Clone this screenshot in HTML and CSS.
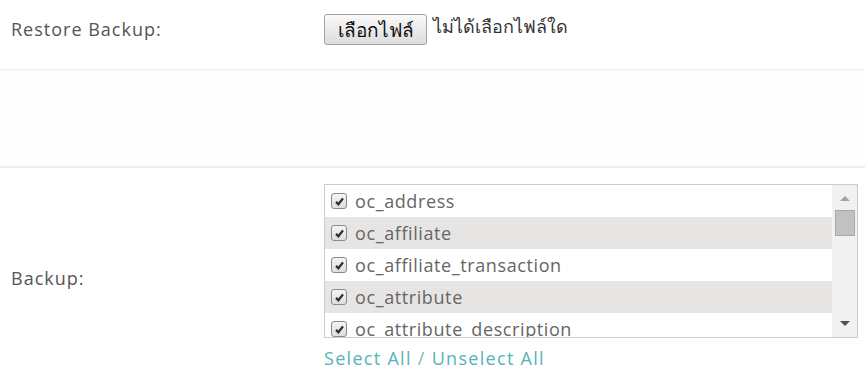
FILE: index.html
```html
<!DOCTYPE html>
<html lang="en">
<head>
  <meta charset="UTF-8">
  <meta name="viewport" content="width=device-width, initial-scale=1.0">
  <title>Backup / Restore</title>
  <link rel="stylesheet" href="styles.css">
</head>
<body>
  <!-- Restore -->
  <div class="form-row restore-row">
    <div class="form-label">Restore Backup:</div>
    <div class="form-control">
      <span class="file-button">เลือกไฟล์</span>
      <span class="file-name">ไม่ได้เลือกไฟล์ใด</span>
    </div>
  </div>

  <div class="form-gap"></div>

  <!-- Backup tables -->
  <div class="form-row backup-row">
    <div class="form-label">Backup:</div>
    <div class="form-control column">
      <div class="table-list">
        <div class="table-items">
          <div class="table-item"><span class="check"><svg viewBox="0 0 12 12"><path d="M2.2 6.4 L4.8 9 L9.8 2.6" /></svg></span>oc_address</div>
          <div class="table-item odd"><span class="check"><svg viewBox="0 0 12 12"><path d="M2.2 6.4 L4.8 9 L9.8 2.6" /></svg></span>oc_affiliate</div>
          <div class="table-item"><span class="check"><svg viewBox="0 0 12 12"><path d="M2.2 6.4 L4.8 9 L9.8 2.6" /></svg></span>oc_affiliate_transaction</div>
          <div class="table-item odd"><span class="check"><svg viewBox="0 0 12 12"><path d="M2.2 6.4 L4.8 9 L9.8 2.6" /></svg></span>oc_attribute</div>
          <div class="table-item last"><span class="check"><svg viewBox="0 0 12 12"><path d="M2.2 6.4 L4.8 9 L9.8 2.6" /></svg></span>oc_attribute_description</div>
        </div>
        <div class="scrollbar">
          <span class="arrow up"></span>
          <span class="thumb"></span>
          <span class="track"></span>
          <span class="arrow down"></span>
        </div>
      </div>
      <div class="select-links">
        <a href="#">Select All</a> / <a href="#">Unselect All</a>
      </div>
    </div>
  </div>
</body>
</html>
```

FILE: styles.css
```css
body {
  margin: 0;
  background-color: #fff;
  font-family: "Open Sans", Arial, sans-serif;
  color: #555;
}
.form-row {
  display: grid;
  grid-template-columns: 313px 1fr;
  align-items: center;
  padding: 0 7px 0 11px;
  border-bottom: 1px solid #ededed;
}
.form-label {
  font-size: 18px;
  letter-spacing: 1px;
  color: #555;
}
.form-control {
  display: flex;
  min-width: 0;
}
.form-control.column {
  flex-direction: column;
}
.restore-row {
  height: 70px;
  box-sizing: border-box;
  align-items: start;
  padding-top: 14px;
}
.restore-row .form-label {
  padding-top: 3px;
}
.file-button {
  width: 103px;
  height: 31px;
  box-sizing: border-box;
  display: flex;
  align-items: center;
  justify-content: center;
  font-family: "DejaVu Sans", Tahoma, sans-serif;
  font-size: 19px;
  color: #111;
  background: linear-gradient(#fafafa, #dcdcdc);
  border: 1px solid #a3a3a3;
  border-radius: 3px;
}
.file-name {
  margin-left: 6px;
  margin-top: -2px;
  font-family: "DejaVu Sans", Tahoma, sans-serif;
  font-size: 18px;
  color: #333;
}
.form-gap {
  height: 96px;
  background-color: #fdfdfd;
  border-bottom: 2px solid #ededed;
}
.backup-row {
  border-bottom: none;
  padding-top: 16px;
  padding-bottom: 5px;
}
.backup-row .form-label {
  padding-top: 2px;
}
.table-list {
  display: flex;
  height: 154px;
  box-sizing: border-box;
  border: 1px solid #ccc;
  overflow: hidden;
}
.table-items {
  flex: 1;
  height: 152px;
  overflow: hidden;
}
.table-item {
  height: 32px;
  display: flex;
  align-items: center;
  padding-left: 6px;
  font-size: 18px;
  letter-spacing: 0.6px;
  color: #666;
}
.table-item.odd {
  background-color: #e6e5e4;
}
.table-item.last {
  align-items: flex-start;
  padding-top: 4px;
  box-sizing: border-box;
}
.check {
  width: 16px;
  height: 16px;
  box-sizing: border-box;
  margin-right: 8px;
  border: 1px solid #8a8a8a;
  border-radius: 3px;
  background: linear-gradient(#f4f4f4, #dedede);
  display: flex;
  align-items: center;
  justify-content: center;
}
.table-item.last .check {
  margin-top: 4px;
}
.check svg {
  width: 11px;
  height: 11px;
  fill: none;
  stroke: #2b2b2b;
  stroke-width: 2.4;
}
.scrollbar {
  width: 25px;
  background-color: #f1f1f1;
  display: flex;
  flex-direction: column;
  align-items: center;
}
.arrow {
  width: 0;
  height: 0;
  border-left: 5px solid transparent;
  border-right: 5px solid transparent;
}
.arrow.up {
  margin-top: 11px;
  border-bottom: 5px solid #a3a3a3;
}
.arrow.down {
  margin-bottom: 11px;
  border-top: 5px solid #505050;
}
.thumb {
  width: 20px;
  height: 26px;
  box-sizing: border-box;
  margin-top: 9px;
  background-color: #c1c1c1;
  border: 1px solid #a8a8a8;
}
.track {
  flex: 1;
}
.select-links {
  margin-top: 8px;
  font-size: 18px;
  letter-spacing: 1.3px;
  color: #7ab9bb;
}
.select-links a {
  color: #55b4b8;
  text-decoration: none;
}
```
